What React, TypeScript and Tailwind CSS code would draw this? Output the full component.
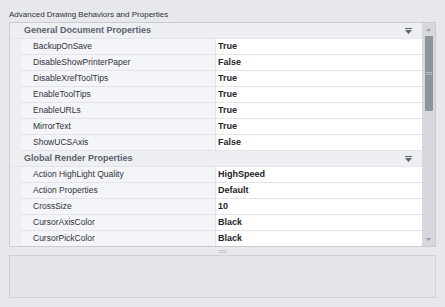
import React from "react"

type Row = { label: string; value: string }
type Group = { title: string; rows: Row[] }

const groups: Group[] = [
  {
    title: "General Document Properties",
    rows: [
      { label: "BackupOnSave", value: "True" },
      { label: "DisableShowPrinterPaper", value: "False" },
      { label: "DisableXrefToolTips", value: "True" },
      { label: "EnableToolTips", value: "True" },
      { label: "EnableURLs", value: "True" },
      { label: "MirrorText", value: "True" },
      { label: "ShowUCSAxis", value: "False" },
    ],
  },
  {
    title: "Global Render Properties",
    rows: [
      { label: "Action HighLight Quality", value: "HighSpeed" },
      { label: "Action Properties", value: "Default" },
      { label: "CrossSize", value: "10" },
      { label: "CursorAxisColor", value: "Black" },
      { label: "CursorPickColor", value: "Black" },
      // next row is only a sliver at the bottom edge
      { label: "", value: "" },
    ],
  },
]

function CollapseIcon() {
  return (
    <svg width="7" height="6" viewBox="0 0 7 6" className="shrink-0">
      <rect x="0" y="0" width="7" height="1" fill="#5b6270" />
      <path d="M0 2 H7 L3.5 6 Z" fill="#5b6270" />
    </svg>
  )
}

function GroupHeader({ title }: { title: string }) {
  return (
    <div className="flex h-[16px] items-center border-b border-[#e2e4e9] bg-[#eeeff2] pl-[14px] pr-[10px]">
      <span className="flex-1 text-[9px] font-bold text-[#5a616d]">{title}</span>
      <CollapseIcon />
    </div>
  )
}

function PropRow({ row }: { row: Row }) {
  return (
    <div className="flex h-[16px] bg-[#eeeff2] pl-[11px]">
      <div className="flex w-[194px] items-center border-b border-[#e2e4e9] bg-[#f4f5f8] pl-[12px] text-[8.5px] text-[#2e3137]">
        {row.label}
      </div>
      <div className="w-px bg-[#e2e4e9]" />
      <div className="flex flex-1 items-center border-b border-[#e2e4e9] bg-white pl-[2px] text-[9px] font-bold text-[#1f2228]">
        {row.value}
      </div>
    </div>
  )
}

function ScrollBar() {
  return (
    <div className="flex w-[13px] flex-col items-center bg-[#d6d8de]">
      <div className="flex h-[13px] items-center justify-center">
        <svg width="5" height="3" viewBox="0 0 5 3">
          <path d="M0 3 L2.5 0 L5 3 Z" fill="#9aa0a8" />
        </svg>
      </div>
      <div className="flex h-[75px] w-[8px] flex-col items-center justify-center rounded-[1px] bg-[#8f949c]">
        <div className="h-[3px] w-[6px] border-y border-[#b9bdc4]" />
      </div>
      <div className="flex-1" />
      <div className="flex h-[13px] items-center justify-center">
        <svg width="5" height="3" viewBox="0 0 5 3">
          <path d="M0 0 L5 0 L2.5 3 Z" fill="#9aa0a8" />
        </svg>
      </div>
    </div>
  )
}

export default function App() {
  return (
    <div
      className="flex h-[307px] w-[445px] flex-col bg-[#e7e8ec] px-[9px]"
      style={{ fontFamily: '"Liberation Sans", Arial, sans-serif' }}
    >
      <div className="h-[22px] pt-[10px] text-[8px] leading-[10px] text-[#2e3137]">
        Advanced Drawing Behaviors and Properties
      </div>
      <div className="flex h-[225px] border border-[#c9ccd2] bg-[#eeeff2]">
        <div className="flex-1 overflow-hidden">
          {groups.map((g) => (
            <div key={g.title}>
              <GroupHeader title={g.title} />
              {g.rows.map((r, i) => (
                <PropRow key={i} row={r} />
              ))}
            </div>
          ))}
        </div>
        <ScrollBar />
      </div>
      <div className="flex h-[8px] items-center justify-center">
        <div className="h-[3px] w-[8px] border-y border-[#c4c7cd]" />
      </div>
      <div className="h-[43px] border border-[#cfd1d6] bg-[#e5e6ea]" />
    </div>
  )
}
